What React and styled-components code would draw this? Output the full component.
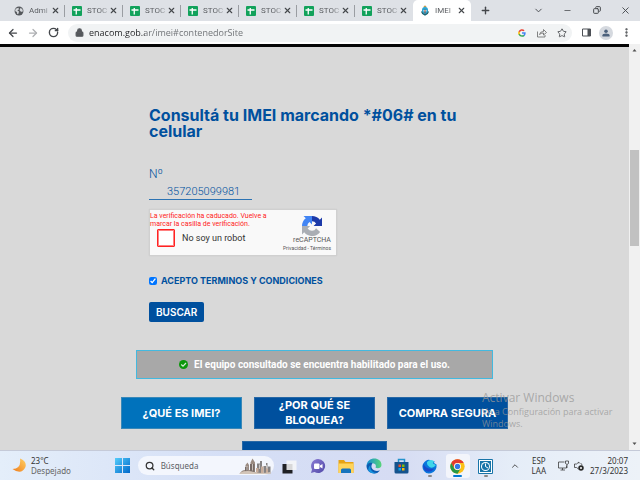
import React from "react";
import styled, { createGlobalStyle } from "styled-components";
import {
  ArrowLeft, ArrowRight, RotateCw, Lock, Star, X, Plus, ChevronDown, ChevronUp, Minus,
  Copy, EllipsisVertical, Search,
} from "lucide-react";

const Global = createGlobalStyle`
  * { box-sizing: border-box; }
  body { margin: 0; font-family: "Open Sans", "Noto Sans", sans-serif; }
  button, input { font-family: inherit; margin: 0; }
  button { border: 0; padding: 0; background: none; color: inherit; cursor: pointer; }
  svg { display: block; flex: none; }
`;

const Screen = styled.div`
  display: flex;
  flex-direction: column;
  height: 100vh;
  overflow: hidden;
`;

/* Browser frame */
const TabStrip = styled.header`
  display: flex;
  height: 21px;
  flex: none;
  padding-left: 7px;
  background: #dee1e6;
`;
const Tab = styled.div`
  display: flex;
  align-items: center;
  width: 58px;
  flex: none;
  padding-left: 7px;
  border-radius: 5px 5px 0 0;
  background: ${(p) => (p.$active ? "#fff" : "transparent")};
`;
const TabTitle = styled.span`
  width: 21px;
  flex: none;
  margin-left: 5px;
  white-space: nowrap;
  font-family: Roboto, sans-serif;
  font-size: 8px;
  line-height: 12px;
  color: #5a5d61;
  mask-image: linear-gradient(to right, #000 60%, rgba(0, 0, 0, 0.25));
`;
const IconButton = styled.button`
  display: flex;
  align-items: center;
  justify-content: center;
  flex: none;
  width: ${(p) => p.$w || 20}px;
  height: ${(p) => p.$h || 20}px;
  color: ${(p) => p.$color || "#44474b"};
`;
const Divider = styled.span`
  width: 1px;
  height: 12px;
  margin-left: auto;
  background: #9a9da2;
`;
const WindowControls = styled.div`
  display: flex;
  margin-left: auto;
`;
const Toolbar = styled.div`
  display: flex;
  align-items: center;
  flex: none;
  height: 23px;
  padding: 0 4px 0 3px;
  background: #fff;
`;
const AddressBar = styled.label`
  display: flex;
  align-items: center;
  flex: 1;
  min-width: 0;
  height: 18px;
  margin: 0 4px 0 5px;
  padding-left: 7px;
  border-radius: 9px;
  background: #f1f3f4;
`;
const AddressInput = styled.input`
  flex: 1;
  min-width: 0;
  height: 18px;
  margin-left: 5px;
  padding: 0;
  border: 0;
  outline: 0;
  font-size: 9px;
  color: transparent;
  background: linear-gradient(to right, #202124 56px, #6a6d71 56px);
  background-clip: text;
`;
const Avatar = styled.span`
  display: flex;
  justify-content: center;
  align-items: center;
  width: 14px;
  height: 14px;
  border-radius: 50%;
  background: #d5d9df;
`;

/* Page */
const Viewport = styled.div`
  position: relative;
  display: flex;
  flex: 1;
  min-height: 0;
`;
const Page = styled.main`
  flex: 1;
  min-width: 0;
  overflow: hidden;
  padding-top: 60px;
  border-top: 3px solid #050505;
  background: #d9d9d9;
  font-family: Inter, sans-serif;
  color: #00509e;
`;
const Form = styled.form`
  display: flex;
  flex-direction: column;
  align-items: flex-start;
  max-width: 331px;
  margin: 0 auto;
`;
const Heading = styled.h1`
  margin: 0 0 28px;
  font-size: 16px;
  line-height: 16px;
  font-weight: 700;
`;
const FieldLabel = styled.label`
  font-family: Roboto, sans-serif;
  font-size: 12px;
  line-height: 14px;
  font-weight: 300;
`;
const ImeiInput = styled.input`
  width: 103px;
  height: 19px;
  padding: 2px 0 0 18px;
  border: 0;
  border-bottom: 1px solid #2c73b3;
  outline: 0;
  background: transparent;
  font-family: Roboto, sans-serif;
  font-size: 11px;
  font-weight: 300;
  color: #00509e;
`;
const Captcha = styled.section`
  display: flex;
  justify-content: space-between;
  width: 188px;
  height: 47px;
  margin-top: 9px;
  border: 1px solid #d0d0d0;
  border-radius: 1px;
  background: #f9f9f9;
  box-shadow: 0 0 1px #bbb;
  font-family: Roboto, sans-serif;
`;
const CaptchaLeft = styled.div`
  flex: 1;
  white-space: nowrap;
`;
const CaptchaError = styled.p`
  margin: 2px 0 1px;
  font-size: 7px;
  line-height: 8px;
  color: #f22;
`;
const CaptchaCheck = styled.label`
  display: flex;
  align-items: center;
  gap: 7px;
  padding-left: 7px;
  font-size: 9px;
  color: #333;
`;
const CaptchaBox = styled.input`
  appearance: none;
  width: 18px;
  height: 18px;
  border: 1px solid #f22;
  outline: 1px solid #ff8080;
  outline-offset: -2px;
  border-radius: 1px;
  background: #fff;
`;
const CaptchaBrand = styled.div`
  display: flex;
  flex-direction: column;
  align-items: center;
  width: 38px;
  flex: none;
  margin-right: 5px;
  padding-top: 6px;
  font-size: 7px;
  line-height: 8px;
  color: #555;
  white-space: nowrap;
`;
const CaptchaLinks = styled.small`
  align-self: flex-end;
  font-size: 5px;
  a { color: inherit; text-decoration: none; }
`;
const Terms = styled.label`
  display: flex;
  align-items: center;
  gap: 4px;
  margin-top: 19px;
  font-size: 9px;
  line-height: 12px;
  font-weight: 700;
`;
const TermsBox = styled.input`
  width: 8px;
  height: 8px;
  accent-color: #0075ff;
`;
const SubmitButton = styled.button`
  height: 20px;
  margin-top: 15px;
  padding: 0 7px;
  border-radius: 2px;
  background: #00509e;
  color: #fff;
  font-size: 10px;
  font-weight: 600;
`;
const Notice = styled.p`
  display: flex;
  align-items: center;
  justify-content: center;
  gap: 6px;
  max-width: 357px;
  height: 29px;
  margin: 28px auto 18px;
  border: 1px solid #43b9df;
  background: #a8a8a8;
  color: #fff;
  font-family: Roboto, sans-serif;
  font-size: 10px;
  font-weight: 700;
`;
const Topics = styled.nav`
  display: flex;
  flex-wrap: wrap;
  justify-content: center;
  gap: 12px;
  max-width: 409px;
  margin: 0 auto;
`;
const Topic = styled.button`
  width: ${(p) => (p.$wide ? 145 : 121)}px;
  height: 32px;
  padding: 0 8px;
  border: 1px solid ${(p) => (p.$light ? "#3988b8" : "#2868a5")};
  background: ${(p) => (p.$light ? "#0072bc" : "#00509e")};
  color: #fff;
  font-size: 11px;
  line-height: 15px;
  font-weight: 700;
`;
const Watermark = styled.aside`
  position: absolute;
  right: 27px;
  bottom: 20px;
  width: 131px;
  color: rgba(150, 150, 150, 0.75);
  font-size: 9px;
  line-height: 12px;
  white-space: nowrap;
  pointer-events: none;
  strong { display: block; font-size: 12px; line-height: 16px; font-weight: 400; }
`;
const ScrollTrack = styled.div`
  display: flex;
  flex-direction: column;
  align-items: center;
  justify-content: space-between;
  width: 11px;
  flex: none;
  padding: 4px 0;
  background: #f1f1f1;
`;
const ScrollRail = styled.div`
  flex: 1;
  width: 9px;
  padding-top: 97px;
`;
const ScrollThumb = styled.div`
  height: 96px;
  background: #c1c1c1;
`;

/* Taskbar */
const Taskbar = styled.footer`
  display: flex;
  align-items: center;
  height: 30px;
  flex: none;
  padding: 0 12px;
  border-top: 1px solid #c5cad8;
  background: linear-gradient(to right, #e4eefa, #d5dff6 35%, #d6dcf3 62%, #e5edf8 80%, #edf2f8);
  color: #333;
  font-family: "Noto Sans", sans-serif;
  font-size: 8px;
  line-height: 10px;
`;
const Weather = styled.div`
  display: flex;
  align-items: center;
  gap: 5px;
  flex: 4 1 0;
  span { color: #666; }
`;
const Launcher = styled.div`
  display: flex;
  align-items: center;
`;
const SearchBox = styled.label`
  display: flex;
  align-items: center;
  width: 136px;
  height: 19px;
  margin: 0 2px 0 8px;
  padding: 0 3px 0 7px;
  border-radius: 10px;
  background: #f3f6fd;
`;
const SearchInput = styled.input`
  flex: 1;
  min-width: 0;
  padding: 0 0 0 6px;
  border: 0;
  outline: 0;
  background: transparent;
  font-size: 8px;
  &::placeholder { color: #5c5f66; opacity: 1; }
`;
const AppButton = styled.button`
  display: flex;
  flex-direction: column;
  align-items: center;
  justify-content: flex-end;
  gap: 1px;
  width: 24px;
  height: 24px;
  padding-bottom: 1px;
  margin: 0 2px;
  border-radius: 3px;
  background: ${(p) => (p.$active ? "#f3f5fb" : "transparent")};
`;
const Indicator = styled.span`
  width: ${(p) => (p.$active ? 9 : 4)}px;
  height: 2px;
  border-radius: 1px;
  background: ${(p) => (p.$running ? (p.$active ? "#0078d4" : "#888") : "transparent")};
`;
const Tray = styled.div`
  display: flex;
  align-items: center;
  justify-content: flex-end;
  flex: 5 1 0;
`;
const Language = styled.div`
  margin: 0 12px;
  text-align: center;
`;
const Status = styled.div`
  display: flex;
  align-items: center;
  gap: 5px;
`;
const Clock = styled.time`
  margin-left: 6px;
  text-align: right;
`;

const Globe = () => (
  <svg width="10" height="10" viewBox="0 0 18 18">
    <circle cx="9" cy="9" r="8" fill="#55585c" />
    <path d="M3 5l5-2 1 3-3 2 3 2-1 4-2 1-1-4-3-2zM12 3l4 4-1 4-3-1-2-3z" fill="#d5d8dc" />
  </svg>
);
const Sheet = () => (
  <svg width="10" height="10" viewBox="0 0 20 20">
    <rect width="20" height="20" rx="2" fill="#12a25b" />
    <path d="M8.5 4v13M3 8h14" stroke="#fff" strokeWidth="2.6" />
  </svg>
);
const Emblem = () => (
  <svg width="10" height="11" viewBox="0 0 20 22">
    <path d="M7 5q0-4 3-4t3 4z" fill="#c79a4a" />
    <path d="M4 10Q4 4 10 4t6 6v4q-2 6-6 7-4-1-6-7z" fill="#2aa4d2" />
    <path d="M7 10h6v3H7z" fill="#eef6f8" />
    <path d="M3 13q1 5 7 7 6-2 7-7" stroke="#1e5c66" strokeWidth="2.5" fill="none" />
    <path d="M10 9v8" stroke="#a5482f" strokeWidth="2" />
  </svg>
);
const Google = () => (
  <svg width="8" height="8" viewBox="0 0 24 24">
    <path d="M23 12.3c0-.8-.1-1.5-.2-2.2H12v4.4h6.2a5.3 5.3 0 0 1-2.3 3.5v2.9h3.7c2.2-2 3.4-5 3.4-8.6z" fill="#4285f4" />
    <path d="M12 23.5c3.1 0 5.7-1 7.6-2.8L15.9 18c-1 .7-2.3 1.1-3.9 1.1-3 0-5.5-2-6.4-4.7H1.8v3A11.5 11.5 0 0 0 12 23.5z" fill="#34a853" />
    <path d="M5.6 14.3a7 7 0 0 1 0-4.5v-3H1.8a11.5 11.5 0 0 0 0 10.4z" fill="#fbbc05" />
    <path d="M12 5c1.7 0 3.2.6 4.4 1.7l3.3-3.3A11.5 11.5 0 0 0 1.8 6.8l3.8 3C6.5 7 9 5 12 5z" fill="#ea4335" />
  </svg>
);
const Share = () => (
  <svg width="10" height="10" viewBox="0 0 20 20" fill="none" stroke="#666" strokeWidth="1.6">
    <path d="M1 7v11h15v-4M5 13q1-6 8-6V3l6 6-6 5v-4q-5 0-8 3z" />
  </svg>
);
const Panel = () => (
  <svg width="9" height="9" viewBox="0 0 18 18">
    <path d="M1 2h16v14H1z" fill="none" stroke="#4d5156" strokeWidth="2" />
    <path d="M11 2h6v14h-6z" fill="#4d5156" />
  </svg>
);
const Person = () => (
  <svg width="8" height="8" viewBox="0 0 18 18" fill="#4c617c">
    <circle cx="9" cy="5" r="4" />
    <path d="M1 17v-3q0-4 8-4t8 4v3z" />
  </svg>
);
const Arrow = ({ down }) => (
  <svg width="5" height="5" viewBox="0 0 10 10">
    <path d={down ? "M1 3h8L5 8z" : "M1 7h8L5 2z"} fill="#505050" />
  </svg>
);
const RecaptchaLogo = () => (
  <svg width="20" height="20" viewBox="0 0 64 64">
    <path d="M64 32V5l-7 7A32 32 0 0 0 32 0v17q9 0 13 7l-8 8z" fill="#1c3aa9" />
    <path d="M32 0H5l7 7A32 32 0 0 0 0 32h17q0-9 7-13l8 8z" fill="#4285f4" />
    <path d="M0 32v27l7-7a32 32 0 0 0 51-1L45 39q-4 8-13 8t-14-7l8-8z" fill="#aaaeb4" />
  </svg>
);
const CheckBadge = () => (
  <svg width="9" height="9" viewBox="0 0 18 18">
    <circle cx="9" cy="9" r="9" fill="#0b970b" />
    <path d="M4.5 9l3.500 3.500 6-6.500" fill="none" stroke="#d6ecd6" strokeWidth="2.4" />
  </svg>
);
const Moon = () => (
  <svg width="14" height="15" viewBox="0 0 28 30">
    <defs><linearGradient id="moon" x1="1" y1="0" x2="0" y2="1"><stop stopColor="#ffd166" /><stop offset="1" stopColor="#ef7b1a" /></linearGradient></defs>
    <path d="M16 1Q30 6 27 18 19 35 1 22 19 21 16 1z" fill="url(#moon)" />
  </svg>
);
const Start = () => (
  <svg width="15" height="15" viewBox="0 0 30 30">
    <defs><linearGradient id="win" x1="0" y1="0" x2="1" y2="1"><stop stopColor="#55cdfb" /><stop offset="1" stopColor="#0068ca" /></linearGradient></defs>
    <path d="M0 0h14v14H0zM16 0h14v14H16zM0 16h14v14H0zM16 16h14v14H16z" fill="url(#win)" />
  </svg>
);
const Skyline = () => (
  <svg width="32" height="16" viewBox="0 0 64 32">
    <path d="M1 32q5-9 12-8V14l4-5 3 5v10h3V9l4-8 5 8v19l10 4z" fill="#9b8c83" />
    <path d="M22 12h9v16h-9zM12 18h6v11h-6z" fill="#776b67" />
    <path d="M36 31V11h6v-5h4v25zM49 31V16h5v-6h3v21zM58 17h5v14h-5z" fill="#868384" />
    <path d="M34 20h5v9h-5zM44 17h5v13h-5zM54 21h4v9h-4z" fill="#c8ad9b" />
    <path d="M3 29q12-5 27-1t33 0v4H1z" fill="#d3c5b9" />
    <path d="M27 12v13M16 16v9M41 13v9M55 14v7" stroke="#e5ddd7" strokeWidth="1.5" />
  </svg>
);
const TaskView = () => (
  <svg width="15" height="15" viewBox="0 0 30 30">
    <path d="M1 10h20v19H1z" fill="#202124" /><path d="M9 3h20v19H9z" fill="#f7f7f7" opacity=".86" />
  </svg>
);
const Chat = () => (
  <svg width="16" height="16" viewBox="0 0 32 32">
    <defs><linearGradient id="chat" x1="0" y1="0" x2="1" y2="1"><stop stopColor="#8a7bd4" /><stop offset="1" stopColor="#514aa8" /></linearGradient></defs>
    <path d="M16 2a14 14 0 1 1-7 26l-7 2 2-7A14 14 0 0 1 16 2z" fill="url(#chat)" />
    <rect x="8" y="11" width="11" height="11" rx="2" fill="#fff" /><path d="M20 15l5-3v9l-5-3z" fill="#fff" />
  </svg>
);
const Folder = () => (
  <svg width="16" height="15" viewBox="0 0 32 30">
    <path d="M1 2h11l3 4h16v22H1z" fill="#e6a315" /><path d="M1 9h30v19H1z" fill="#ffd45a" />
    <path d="M6 28v-6q0-3 3-3h14q3 0 3 3v6z" fill="#1673bd" />
  </svg>
);
const Edge = () => (
  <svg width="16" height="16" viewBox="0 0 32 32">
    <defs><linearGradient id="edge"><stop stopColor="#138bd6" /><stop offset="1" stopColor="#58d678" /></linearGradient></defs>
    <path d="M1 17C1-4 31-4 31 14c0 7-9 8-12 5 3-6-3-10-9-8-5 1-8 3-9 6z" fill="url(#edge)" />
    <path d="M1 16q4-8 12-6c-6 9 1 19 15 15A15 15 0 0 1 1 16z" fill="#0c5bb0" />
    <path d="M9 14c-2 10 5 17 14 15Q12 34 5 26q-2-7 4-12z" fill="#1694df" />
  </svg>
);
const Store = () => (
  <svg width="15" height="16" viewBox="0 0 30 32">
    <path d="M9 9V3h12v6" fill="none" stroke="#2492cc" strokeWidth="3" />
    <path d="M1 8h28v20q0 3-3 3H4q-3 0-3-3z" fill="#15538d" />
    <path d="M9 13h5v5H9z" fill="#f35325" /><path d="M16 13h5v5h-5z" fill="#81bc06" />
    <path d="M9 20h5v5H9z" fill="#05a6f0" /><path d="M16 20h5v5h-5z" fill="#ffba08" />
  </svg>
);
const BlueSwirl = () => (
  <svg width="15" height="15" viewBox="0 0 30 30">
    <path d="M2 10q7-10 14-8l3 3 6-1-1 4 5 3q1 10-6 15-12 7-19-2-5-7-2-14z" fill="#0876dc" />
    <path d="M10 6q6-7 14-2l-2 5 6 3q-6 8-13 4-6-3-5-10z" fill="#40d5e9" />
    <path d="M3 10q5 12 22 9-8 10-18 5-6-6-4-14z" fill="#1949ca" />
  </svg>
);
const Chrome = () => (
  <svg width="15" height="15" viewBox="0 0 48 48">
    <circle cx="24" cy="24" r="23" fill="#fbc116" />
    <path d="M4 12.5A23 23 0 0 1 44 12.5H24a12 12 0 0 0-10.400 17.500z" fill="#e33b2e" />
    <path d="M4 12.5A23 23 0 0 0 24 47l10-17a12 12 0 0 1-20.400 0z" fill="#279847" />
    <circle cx="24" cy="24" r="11" fill="#fff" /><circle cx="24" cy="24" r="8.5" fill="#3478e5" />
  </svg>
);
const ClockApp = () => (
  <svg width="15" height="15" viewBox="0 0 30 30">
    <path d="M1 1h28v28H1z" fill="#fff" stroke="#1874a8" strokeWidth="2" />
    <path d="M4 4h22v22H4z" fill="#1874a8" /><circle cx="15" cy="15" r="9" fill="#fff" />
    <circle cx="15" cy="15" r="7" fill="#1874a8" /><path d="M15 9v6l5 3" fill="none" stroke="#fff" strokeWidth="2" />
  </svg>
);
const Network = () => (
  <svg width="11" height="11" viewBox="0 0 22 22" fill="none" stroke="#333" strokeWidth="1.5">
    <path d="M13 4H1v12h16v-5M9 16v4M5 20h9M15 2h6v5q-3 4-6 0zM18 9v7" />
  </svg>
);
const Muted = () => (
  <svg width="10" height="10" viewBox="0 0 20 20">
    <path d="M10 5V2L5 6H1v7h4l4 3M13 4q3 2 3 5" fill="none" stroke="#333" strokeWidth="1.5" />
    <circle cx="14" cy="14" r="5.5" fill="#292929" /><path d="M12 12l4 4M16 12l-4 4" stroke="#fff" strokeWidth="1.5" />
  </svg>
);

const tabs = [
  { title: "Admi", Icon: Globe },
  ...Array.from({ length: 6 }, () => ({ title: "STOC", Icon: Sheet })),
  { title: "IMEI", Icon: Emblem, active: true },
];
const apps = [
  { name: "Vista de tareas", Icon: TaskView },
  { name: "Chat", Icon: Chat },
  { name: "Explorador", Icon: Folder },
  { name: "Edge", Icon: Edge },
  { name: "Store", Icon: Store },
  { name: "Navegador", Icon: BlueSwirl, running: true },
  { name: "Chrome", Icon: Chrome, running: true, active: true },
  { name: "Reloj", Icon: ClockApp, running: true },
];

function Browser() {
  return (
    <>
      <TabStrip>
        {tabs.map(({ title, Icon, active }, i) => (
          <Tab key={i} $active={active}>
            <Icon />
            <TabTitle>{title}</TabTitle>
            <IconButton $w={11} $h={12} aria-label="Cerrar pestaña"><X size={9} strokeWidth={3} /></IconButton>
            {i < 6 && <Divider />}
          </Tab>
        ))}
        <IconButton $w={29} aria-label="Nueva pestaña"><Plus size={11} strokeWidth={3} /></IconButton>
        <WindowControls>
          <IconButton $w={29} aria-label="Buscar pestañas"><ChevronDown size={11} /></IconButton>
          <IconButton $w={29} aria-label="Minimizar"><Minus size={9} /></IconButton>
          <IconButton $w={29} aria-label="Restaurar"><Copy size={8} strokeWidth={3} transform="scale(-1 1)" /></IconButton>
          <IconButton $w={29} aria-label="Cerrar"><X size={11} /></IconButton>
        </WindowControls>
      </TabStrip>
      <Toolbar>
        <IconButton aria-label="Atrás"><ArrowLeft size={12} strokeWidth={2.5} /></IconButton>
        <IconButton aria-label="Adelante" $color="#aeb0b3"><ArrowRight size={12} strokeWidth={2.5} /></IconButton>
        <IconButton aria-label="Recargar"><RotateCw size={11} strokeWidth={3} /></IconButton>
        <AddressBar>
          <Lock size={9} color="#55585c" fill="#55585c" strokeWidth={3} />
          <AddressInput aria-label="Dirección" defaultValue="enacom.gob.ar/imei#contenedorSite" />
          <IconButton aria-label="Google"><Google /></IconButton>
          <IconButton aria-label="Compartir"><Share /></IconButton>
          <IconButton aria-label="Favorito"><Star size={10} /></IconButton>
        </AddressBar>
        <IconButton aria-label="Panel lateral"><Panel /></IconButton>
        <IconButton aria-label="Perfil"><Avatar><Person /></Avatar></IconButton>
        <IconButton aria-label="Menú"><EllipsisVertical size={11} strokeWidth={3} /></IconButton>
      </Toolbar>
    </>
  );
}

function ImeiPage() {
  return (
    <Page>
      <Form onSubmit={(e) => e.preventDefault()}>
        <Heading>Consultá tu IMEI marcando *#06# en tu celular</Heading>
        <FieldLabel htmlFor="imei">Nº</FieldLabel>
        <ImeiInput id="imei" defaultValue="357205099981" />
        <Captcha>
          <CaptchaLeft>
            <CaptchaError>La verificación ha caducado. Vuelve a<br />marcar la casilla de verificación.</CaptchaError>
            <CaptchaCheck><CaptchaBox type="checkbox" />No soy un robot</CaptchaCheck>
          </CaptchaLeft>
          <CaptchaBrand>
            <RecaptchaLogo />
            <span>reCAPTCHA</span>
            <CaptchaLinks><a href="#privacidad">Privacidad</a> - <a href="#terminos">Términos</a></CaptchaLinks>
          </CaptchaBrand>
        </Captcha>
        <Terms><TermsBox type="checkbox" defaultChecked />ACEPTO TERMINOS Y CONDICIONES</Terms>
        <SubmitButton type="submit">BUSCAR</SubmitButton>
      </Form>
      <Notice role="status"><CheckBadge />El equipo consultado se encuentra habilitado para el uso.</Notice>
      <Topics>
        <Topic $light>¿QUÉ ES IMEI?</Topic>
        <Topic>¿POR QUÉ SE BLOQUEA?</Topic>
        <Topic>COMPRA SEGURA</Topic>
        <Topic $wide aria-label="Más información" />
      </Topics>
    </Page>
  );
}

export default function App() {
  return (
    <Screen>
      <Global />
      <Browser />
      <Viewport>
        <ImeiPage />
        <ScrollTrack>
          <Arrow />
          <ScrollRail><ScrollThumb /></ScrollRail>
          <Arrow down />
        </ScrollTrack>
        <Watermark><strong>Activar Windows</strong>Ve a Configuración para activar<br />Windows.</Watermark>
      </Viewport>
      <Taskbar>
        <Weather><Moon /><div>23°C<br /><span>Despejado</span></div></Weather>
        <Launcher>
          <IconButton $w={15} aria-label="Inicio"><Start /></IconButton>
          <SearchBox>
            <Search size={10} strokeWidth={3} />
            <SearchInput aria-label="Búsqueda" placeholder="Búsqueda" />
            <Skyline />
          </SearchBox>
          {apps.map(({ name, Icon, running, active }) => (
            <AppButton key={name} aria-label={name} $active={active}>
              <Icon />
              <Indicator $running={running} $active={active} />
            </AppButton>
          ))}
        </Launcher>
        <Tray>
          <ChevronUp size={10} />
          <Language>ESP<br />LAA</Language>
          <Status><Network /><Muted /></Status>
          <Clock>20:07<br />27/3/2023</Clock>
        </Tray>
      </Taskbar>
    </Screen>
  );
}
